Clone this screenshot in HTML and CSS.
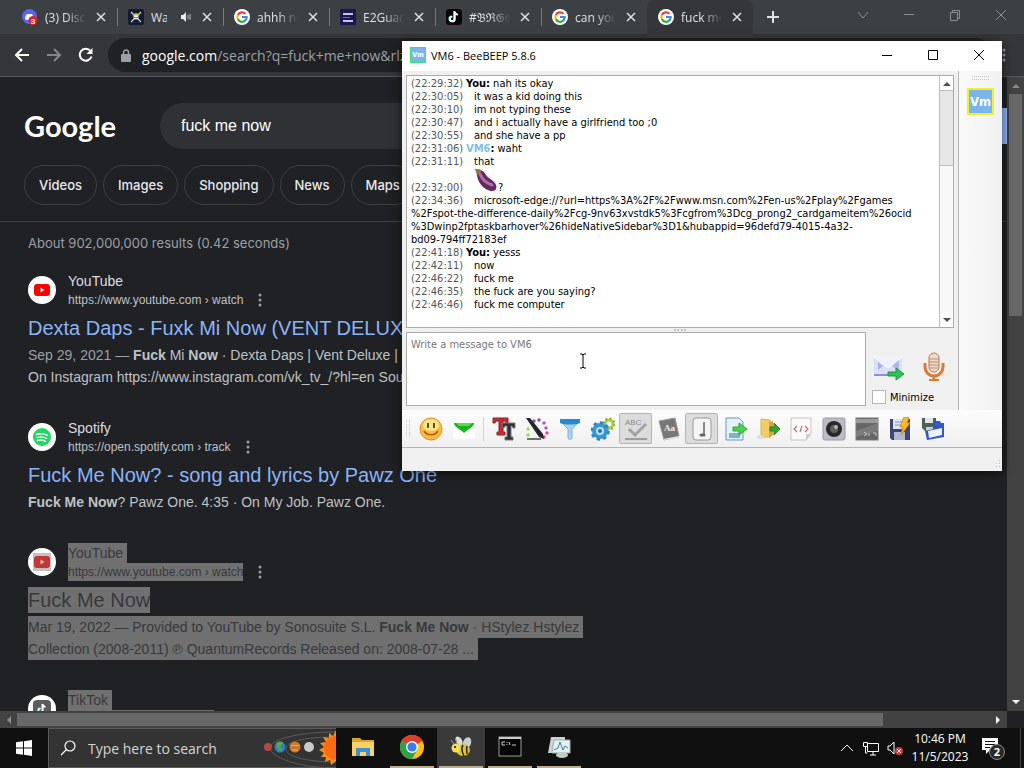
FILE: index.html
```html
<!DOCTYPE html>
<html lang="en">
<head>
  <meta charset="utf-8">
  <title>Desktop</title>
  <link rel="stylesheet" href="styles.css">
</head>
<body>
  <svg class="defs" aria-hidden="true">
    <symbol id="g-logo" viewBox="0 0 48 48">
      <circle cx="24" cy="24" r="24" fill="#fff"/>
      <g fill="none" stroke-width="6.5">
        <path d="M34.500 14.500A14 14 0 0 0 11.500 18" stroke="#ea4335"/>
        <path d="M11.500 18a14 14 0 0 0 0 12" stroke="#fbbc05"/>
        <path d="M11.500 30a14 14 0 0 0 22 5" stroke="#34a853"/>
        <path d="M33 35a14 14 0 0 0 5-11H24" stroke="#4285f4"/>
      </g>
    </symbol>
    <symbol id="note" viewBox="0 0 20 20">
      <path d="M11 3v9.500a3 3 0 1 1-3-3M11 3c0 2.500 2 4 4 4" fill="none" stroke="#25f4ee" stroke-width="2" transform="translate(-1 -.5)"/>
      <path d="M11 3v9.500a3 3 0 1 1-3-3M11 3c0 2.500 2 4 4 4" fill="none" stroke="#fff" stroke-width="2.400"/>
    </symbol>
    <symbol id="yt" viewBox="0 0 28 28">
      <circle cx="14" cy="14" r="14" fill="#fff"/>
      <rect x="6" y="8" width="16" height="12" rx="3" fill="#f00"/>
      <path d="M12.500 11.500v5l4-2.500z" fill="#fff"/>
    </symbol>
    <symbol id="dots" viewBox="0 0 4 16">
      <circle cx="2" cy="3" r="1.500"/><circle cx="2" cy="8" r="1.500"/><circle cx="2" cy="13" r="1.500"/>
    </symbol>
    <symbol id="x" viewBox="0 0 10 10">
      <path d="M1 1l8 8M9 1l-8 8" fill="none" stroke="currentColor" stroke-width="1.500"/>
    </symbol>
  </svg>

  <div class="browser">
    <div class="tabs">
      <div class="tab">
        <svg class="fav" viewBox="0 0 16 16"><circle cx="7.500" cy="7.500" r="7.500" fill="#5865f2"/><path d="M3 10.500c0-3 1-5 2-5.500h5l1 2-5 4z" fill="#fff"/><circle cx="11" cy="11.500" r="4.500" fill="#d9252a"/><text x="11" y="14.500" class="badge-num">3</text></svg>
        <span class="tab-title">(3) Discord</span>
        <button class="tab-close" aria-label="Close tab"><svg><use href="#x"/></svg></button>
      </div>
      <div class="tab">
        <svg class="fav" viewBox="0 0 16 16"><rect width="16" height="16" rx="2" fill="#141c33"/><path d="M3 3l10 10M13 3L3 13" stroke="#d5d8d4" stroke-width="1.200"/><circle cx="8" cy="8" r="2.500" fill="#f2f2ec"/><path d="M4.500 6.500c1-3 6-3 7 0z" fill="#c9c75a"/><path d="M6.500 8.500h1M8.500 8.500h1" stroke="#141c33"/></svg>
        <span class="tab-title short">Watch</span>
        <svg class="speaker" viewBox="0 0 12 12"><path d="M1 4h2l3-3v10L3 8H1z" fill="#e8eaed"/><path d="M8 4v4M10 3v6" stroke="#bbb" stroke-width="1"/></svg>
        <button class="tab-close" aria-label="Close tab"><svg><use href="#x"/></svg></button>
      </div>
      <div class="tab">
        <svg class="fav"><use href="#g-logo"/></svg>
        <span class="tab-title">ahhh no way</span>
        <button class="tab-close" aria-label="Close tab"><svg><use href="#x"/></svg></button>
      </div>
      <div class="tab">
        <svg class="fav" viewBox="0 0 16 16"><rect width="16" height="16" fill="#1b1750"/><path d="M3 5h10M3 12h10" stroke="#c5c5dc" stroke-width="2"/><path d="M3 8.500h7" stroke="#6d6a9a"/></svg>
        <span class="tab-title">E2Guardian</span>
        <button class="tab-close" aria-label="Close tab"><svg><use href="#x"/></svg></button>
      </div>
      <div class="tab">
        <svg class="fav" viewBox="0 0 20 20"><rect width="20" height="20" rx="4" fill="#0b0508"/><use href="#note" width="20" height="20"/></svg>
        <span class="tab-title">#𝔅ℜ𝔊𝔊</span>
        <button class="tab-close" aria-label="Close tab"><svg><use href="#x"/></svg></button>
      </div>
      <div class="tab">
        <svg class="fav"><use href="#g-logo"/></svg>
        <span class="tab-title">can you see</span>
        <button class="tab-close" aria-label="Close tab"><svg><use href="#x"/></svg></button>
      </div>
      <div class="tab active">
        <svg class="fav"><use href="#g-logo"/></svg>
        <span class="tab-title">fuck me now</span>
        <button class="tab-close" aria-label="Close tab"><svg><use href="#x"/></svg></button>
      </div>
      <button class="new-tab" aria-label="New tab"><svg viewBox="0 0 12 12"><path d="M6 0v12M0 6h12" stroke="currentColor" stroke-width="2"/></svg></button>
      <div class="win-controls">
        <button aria-label="Search tabs"><svg viewBox="0 0 12 12"><path d="M1 3l5 6 5-6"/></svg></button>
        <button aria-label="Minimize"><svg viewBox="0 0 12 12"><path d="M1 5.500h10"/></svg></button>
        <button aria-label="Restore"><svg viewBox="0 0 12 12"><path d="M1.500 3.500h7v8h-7zM3.500 3V1.500h7v8H9"/></svg></button>
        <button aria-label="Close"><svg viewBox="0 0 12 12"><path d="M1 1l10 10M11 1L1 11"/></svg></button>
      </div>
    </div>

    <div class="nav">
      <button aria-label="Back"><svg viewBox="0 0 16 16"><path d="M15 8H2M8 2L2 8l6 6"/></svg></button>
      <button class="off" aria-label="Forward"><svg viewBox="0 0 16 16"><path d="M1 8h13M8 2l6 6-6 6"/></svg></button>
      <button aria-label="Reload"><svg viewBox="0 0 16 16"><path d="M13.500 9.500A6 6 0 1 1 12.500 4"/><path d="M14.500 1v6h-6z" class="solid"/></svg></button>
      <div class="address">
        <svg viewBox="0 0 10 13"><rect y="5" width="10" height="8" rx="1" fill="#9aa0a6"/><path d="M2.500 5V3.500a2.500 2.500 0 0 1 5 0V5" fill="none" stroke="#9aa0a6" stroke-width="1.500"/></svg>
        <span><b>google.com</b>/search?q=fuck+me+now&amp;rlz=1C1</span>
      </div>
      <button class="menu" aria-label="Menu"><svg viewBox="0 0 4 16"><use href="#dots"/></svg></button>
    </div>

    <div class="viewport">
      <main class="page">
        <header class="g-header">
          <a class="g-logo" href="#">Google</a>
          <input class="g-search" type="text" value="fuck me now" aria-label="Search">
          <a class="sign-in" href="#" aria-label="Sign in"></a>
        </header>
        <nav class="chips">
          <a href="#">Videos</a>
          <a href="#">Images</a>
          <a href="#">Shopping</a>
          <a href="#">News</a>
          <a href="#">Maps</a>
        </nav>
        <div class="results">
          <p class="stats">About 902,000,000 results (0.42 seconds)</p>

          <article class="result">
            <div class="source">
              <svg class="site"><use href="#yt"/></svg>
              <div><span class="name">YouTube</span><cite>https://www.youtube.com › watch</cite></div>
              <button class="more" aria-label="About this result"><svg><use href="#dots"/></svg></button>
            </div>
            <h3><a href="#">Dexta Daps - Fuxk Mi Now (VENT DELUXE)</a></h3>
            <p><span class="date">Sep 29, 2021 —</span> <b>Fuck</b> Mi <b>Now</b> · Dexta Daps | Vent Deluxe |<br>On Instagram https://www.instagram.com/vk_tv_/?hl=en Sou</p>
          </article>

          <article class="result">
            <div class="source">
              <svg class="site" viewBox="0 0 28 28"><circle cx="14" cy="14" r="14" fill="#fff"/><circle cx="14" cy="14" r="9" fill="#1ed760"/><path d="M8.500 11.500c4-1.200 8-.8 11 .8M9 14.500c3.500-1 7-.6 9.500.8M9.500 17.500c3-.8 5.500-.5 8 .8" fill="none" stroke="#fff" stroke-width="1.500" stroke-linecap="round"/></svg>
              <div><span class="name">Spotify</span><cite>https://open.spotify.com › track</cite></div>
              <button class="more" aria-label="About this result"><svg><use href="#dots"/></svg></button>
            </div>
            <h3><a href="#">Fuck Me Now? - song and lyrics by Pawz One</a></h3>
            <p><b>Fuck Me Now</b>? Pawz One. 4:35 · On My Job. Pawz One.</p>
          </article>

          <article class="result selected">
            <div class="source">
              <svg class="site" viewBox="0 0 28 28"><use href="#yt"/><rect x="5" y="5" width="18" height="18" fill="#777" opacity=".45"/></svg>
              <div><span class="name">YouTube&nbsp;</span><cite>https://www.youtube.com › watch</cite></div>
              <button class="more" aria-label="About this result"><svg><use href="#dots"/></svg></button>
            </div>
            <h3><a href="#">Fuck Me Now</a></h3>
            <p><mark>Mar 19, 2022 — Provided to YouTube by Sonosuite S.L. <b>Fuck Me Now</b> · HStylez Hstylez&nbsp;</mark><br><mark>Collection (2008-2011) ℗ QuantumRecords Released on: 2008-07-28 ...&nbsp;</mark></p>
          </article>

          <article class="result selected">
            <div class="source">
              <svg class="site" viewBox="0 0 28 28"><circle cx="14" cy="14" r="14" fill="#fff"/><rect x="5" y="5" width="18" height="18" rx="4" fill="#5c5c5c"/><use href="#note" x="7" y="7" width="14" height="14"/></svg>
              <div><span class="name">TikTok&nbsp;</span><cite>https://www.tiktok.com › tag</cite></div>
            </div>
          </article>
        </div>
      </main>
      <div class="vbar">
        <button aria-label="Scroll up"><svg viewBox="0 0 8 5"><path d="M0 5l4-4 4 4z" fill="#8a8a8a"/></svg></button>
        <div class="track"><div class="thumb"></div></div>
        <button aria-label="Scroll down"><svg viewBox="0 0 8 5"><path d="M0 0l4 4 4-4z" fill="#fff"/></svg></button>
      </div>
    </div>
    <div class="hbar">
      <button aria-label="Scroll left"><svg viewBox="0 0 5 8"><path d="M5 0L1 4l4 4z" fill="#8a8a8a"/></svg></button>
      <div class="track"><div class="thumb"></div></div>
      <button aria-label="Scroll right"><svg viewBox="0 0 5 8"><path d="M0 0l4 4-4 4z" fill="#fff"/></svg></button>
    </div>
  </div>

  <section class="chat">
    <div class="titlebar">
      <span class="vm small">Vm</span>
      <h1>VM6 - BeeBEEP 5.8.6</h1>
      <button aria-label="Minimize"><svg viewBox="0 0 12 12"><path d="M1 6.500h10"/></svg></button>
      <button aria-label="Maximize"><svg viewBox="0 0 12 12"><path d="M1.500 1.500h9v9h-9z"/></svg></button>
      <button aria-label="Close"><svg viewBox="0 0 12 12"><path d="M1 1l10 10M11 1L1 11"/></svg></button>
    </div>

    <div class="chat-body">
      <div class="chat-main">
        <div class="log">
          <ul>
            <li><time>(22:29:32)</time><b>You:</b> nah its okay</li>
            <li class="cont"><time>(22:30:05)</time>it was a kid doing this</li>
            <li class="cont"><time>(22:30:10)</time>im not typing these</li>
            <li class="cont"><time>(22:30:47)</time>and i actually have a girlfriend too ;0</li>
            <li class="cont"><time>(22:30:55)</time>and she have a pp</li>
            <li><time>(22:31:06)</time><b class="peer">VM6</b><b>:</b> waht</li>
            <li class="cont"><time>(22:31:11)</time>that</li>
            <li class="cont"><time>(22:32:00)</time><svg class="eggplant" viewBox="0 0 24 24"><path d="M3 4c4-3 7-1 9 3 2 3 5 4 8 7 4 4 3 9-2 9C11 23 2 14 3 4z" fill="#662a62"/><path d="M6 6c2 5 6 9 12 11" fill="none" stroke="#b070aa" stroke-width="3" stroke-linecap="round"/><path d="M1 1l4 0 3 2-3 2-2 3-1-4z" fill="#8a7a45"/></svg>?</li>
            <li class="cont"><time>(22:34:36)</time>microsoft-edge://?url=https%3A%2F%2Fwww.msn.com%2Fen-us%2Fplay%2Fgames<br>%2Fspot-the-difference-daily%2Fcg-9nv63xvstdk5%3Fcgfrom%3Dcg_prong2_cardgameitem%26ocid<br>%3Dwinp2fptaskbarhover%26hideNativeSidebar%3D1&amp;hubappid=96defd79-4015-4a32-<br>bd09-794ff72183ef</li>
            <li><time>(22:41:18)</time><b>You:</b> yesss</li>
            <li class="cont"><time>(22:42:11)</time>now</li>
            <li class="cont"><time>(22:46:22)</time>fuck me</li>
            <li class="cont"><time>(22:46:35)</time>the fuck are you saying?</li>
            <li class="cont"><time>(22:46:46)</time>fuck me computer</li>
          </ul>
          <div class="log-bar">
            <button aria-label="Scroll up"><svg viewBox="0 0 8 5"><path d="M0 5l4-4 4 4z"/></svg></button>
            <div class="track"><div class="thumb"></div></div>
            <button aria-label="Scroll down"><svg viewBox="0 0 8 5"><path d="M0 0l4 4 4-4z"/></svg></button>
          </div>
        </div>
        <div class="splitter"><i></i></div>
        <div class="compose">
          <textarea placeholder="Write a message to VM6" aria-label="Message"></textarea>
          <div class="send">
            <button aria-label="Send"><svg viewBox="0 0 32 32"><path d="M2 6h28v18H2z" fill="#dcdffa"/><path d="M2 23h22v2H2z" fill="#8d93c4"/><path d="M2 6l14 11L30 6" fill="#eef0ff" stroke="#fff"/><path d="M6 11l5 4-5 4z" fill="#aab0e6"/><path d="M27 9l-7 6 7 5z" fill="#aab8e6"/><path d="M16 21h8v-4l8 6-8 6v-4h-8z" fill="#2fc254" stroke="#1d9a3c"/></svg></button>
            <button aria-label="Record voice"><svg viewBox="0 0 32 32"><path d="M7 12v4a9 9 0 0 0 18 0v-4M16 25v4" fill="none" stroke="#d9793a" stroke-width="3"/><path d="M11 29h10" stroke="#d9793a" stroke-width="2"/><rect x="11" y="2" width="10" height="19" rx="5" fill="#e6dcd4" stroke="#c9743e"/><path d="M11 8h10M11 11h10M11 14h10M11 17h10" stroke="#c98b62"/></svg></button>
            <label><input type="checkbox"> Minimize</label>
          </div>
        </div>
      </div>
      <aside class="dock">
        <i class="grip-h"></i>
        <span class="vm">Vm</span>
      </aside>
    </div>

    <div class="toolbar">
      <i class="grip-v"></i>
      <button aria-label="Emoticons"><svg viewBox="0 0 24 24"><circle cx="12" cy="12" r="11" fill="#fdbd3c" stroke="#e3902a"/><ellipse cx="12" cy="8" rx="8" ry="6" fill="#ffe68a"/><path d="M9 6v5M15 6v5" stroke="#5b3a10" stroke-width="1.800"/><path d="M5 14c3 5 11 5 14 0" fill="none" stroke="#b0561a" stroke-width="1.500"/></svg></button>
      <button aria-label="Presence"><svg viewBox="0 0 24 24"><rect x="1" y="5" width="22" height="17" rx="3" fill="#fff"/><path d="M2 6h20c0 4-6 6-10 10C8 12 2 10 2 6z" fill="#17b51c"/><path d="M4 6h16l-3 3H7z" fill="#57dc4b"/></svg></button>
      <i class="sep"></i>
      <button aria-label="Font"><svg viewBox="0 0 24 24"><path d="M1 1h15v5h-2l-1-2h-2v11h2v3H5v-3h2V4H4L3 6H1z" fill="#cc2a32" stroke="#8b2229"/><path d="M10 6h13v5h-2l-1-2h-1v11h2v3h-8v-3h2V9h-2l-1 2h-1z" fill="#303238" stroke="#777"/></svg></button>
      <button aria-label="Font color"><svg viewBox="0 0 24 24"><g stroke-width="3.500" stroke-linecap="round" fill="none"><path d="M3 18v0M3 12v0" stroke="#9be05a"/><path d="M9 4v0M14 3v0" stroke="#7257b8"/><path d="M19 6v0M21 11v0" stroke="#a566b5"/><path d="M22 16v0M19 20v0" stroke="#e0508e"/></g><path d="M1 1l4 0L18 17l1 5-5-2z" fill="#24262b"/><path d="M2 22h14" stroke="#444" stroke-width="1.500"/></svg></button>
      <button aria-label="Filter"><svg viewBox="0 0 24 24"><path d="M2 4l8 8v9c1 2 3 2 4 0v-9l8-8z" fill="#a7d3f0" stroke="#7fb4dc"/><path d="M2 2h20v4c-5 2-15 2-20 0z" fill="#258bcf"/></svg></button>
      <button aria-label="Options"><svg viewBox="0 0 24 24"><circle cx="18" cy="7" r="4" fill="none" stroke="#a6ce4d" stroke-width="3"/><circle cx="18" cy="7" r="5.500" fill="none" stroke="#86b331" stroke-width="2" stroke-dasharray="2 2.300"/><circle cx="9" cy="14" r="6" fill="#bfe2f7" stroke="#3599d6" stroke-width="4"/><circle cx="9" cy="14" r="8.500" fill="none" stroke="#2a85c4" stroke-width="2.500" stroke-dasharray="3.300 3.300"/><circle cx="9" cy="14" r="2" fill="#2a6fa5"/></svg></button>
      <button class="pressed" aria-label="Spell check"><svg viewBox="0 0 24 24"><text x="1" y="8" class="abc">ABC</text><path d="M5 12l6 6L22 7" fill="none" stroke="#a2a2a2" stroke-width="3"/><path d="M1 22h22" stroke="#888" stroke-width="1.500"/></svg></button>
      <button aria-label="Dictionary"><svg viewBox="0 0 24 24"><path d="M2 4L18 1l4 18L7 23z" fill="#777" stroke="#999"/><path d="M6 22l16-3v2L7 23z" fill="#ddd"/><text x="7" y="14" class="aa">Aa</text></svg></button>
      <button class="pressed" aria-label="Beep"><svg viewBox="0 0 24 24"><rect x="3" y="1" width="18" height="22" rx="3" fill="#f4f4f4" stroke="#999"/><path d="M14 5v12" stroke="#666" stroke-width="1.500"/><path d="M14 18h-3" stroke="#666" stroke-width="3" stroke-linecap="round"/></svg></button>
      <button aria-label="Send file"><svg viewBox="0 0 24 24"><path d="M3 1h13l4 4v18H3z" fill="#e3f1f8" stroke="#6e97b5"/><path d="M6 16h11v5H6z" fill="#7fb0cd"/><path d="M10 10h6V6l8 6-8 6v-4h-6z" fill="#4fd04c" stroke="#2ba336"/></svg></button>
      <button aria-label="Send folder"><svg viewBox="0 0 24 24"><path d="M5 2l9 1v17H5z" fill="#f1cd66" stroke="#dcb350"/><path d="M13 5l4-1v14l-4 3z" fill="#d5a540"/><path d="M1 20c2-4 7-2 8 2H2z" fill="#ddd"/><path d="M14 10h4V6l6 6-6 6v-4h-4z" fill="#35a32f" stroke="#2b862a"/></svg></button>
      <button aria-label="Code"><svg viewBox="0 0 24 24"><path d="M2 1h20v16l-5 6H2z" fill="#fbfafa" stroke="#c9c3c3"/><path d="M22 17h-5v6z" fill="#ccc"/><path d="M8 9l-3 3 3 3M16 9l3 3-3 3M13 9l-2 6" fill="none" stroke="#cc6a6d" stroke-width="1.200"/></svg></button>
      <button aria-label="Screenshot"><svg viewBox="0 0 24 24"><rect x="1" y="1" width="22" height="22" rx="2" fill="#bcbcc8" stroke="#9a9aa6"/><circle cx="12" cy="12" r="8" fill="#292929"/><circle cx="12" cy="12" r="4" fill="#5b6358"/><circle cx="14" cy="10" r="2" fill="#b5b9ad"/></svg></button>
      <button aria-label="Console"><svg viewBox="0 0 24 24"><rect x="1" y="1" width="22" height="22" fill="#666" stroke="#777"/><path d="M1 2h22v4H1z" fill="#9a9a9a"/><path d="M1 14L23 6v8L1 20z" fill="#7b7b7b"/><path d="M9 15l3 2-3 2M14 16v3M18 16h3v3" fill="none" stroke="#ccc"/></svg></button>
      <button aria-label="Save as"><svg viewBox="0 0 24 24"><path d="M2 2h20v21H4l-2-2z" fill="#3b4674"/><path d="M5 2h13v10H5z" fill="#dbe4f0"/><path d="M7 5h8M7 8h6" stroke="#8795b5"/><path d="M6 15h11v8H6z" fill="#aeb8cd"/><path d="M16 0h5l-2 6h3l-9 12 2-8h-3z" fill="#ffb92e" stroke="#e38c17"/></svg></button>
      <button aria-label="Save"><svg viewBox="0 0 24 24"><path d="M1 1h14v13H4l-3-3z" fill="#4a6357"/><path d="M4 1h8v5H4z" fill="#dfe7e0"/><path d="M5 10h7v4H5z" fill="#c8d2cb"/><path d="M13 8V4h6l1 2h3v14L6 23l-2-9 9-2z" fill="#3555c0"/><path d="M7 14l14-3v7L8 21z" fill="#eaf3ff"/></svg></button>
    </div>
    <footer class="status"><i class="resize"></i></footer>
    <svg class="caret" viewBox="0 0 8 16"><path d="M1 1h2l1 1 1-1h2M4 2v12M1 15h2l1-1 1 1h2" fill="none" stroke="#000"/></svg>
  </section>

  <div class="taskbar">
    <button class="start" aria-label="Start"><svg viewBox="0 0 16 16"><path d="M0 2.300L7 1.300v6.200H0zM8 1.200L16 0v7.500H8zM0 8.500h7v6.200L0 13.700zM8 8.500h8V16l-8-1.200z" fill="#fff"/></svg></button>
    <label class="find">
      <svg class="glass" viewBox="0 0 16 16"><circle cx="10" cy="6" r="5"/><path d="M6.500 9.500L1 15"/></svg>
      <input type="text" placeholder="Type here to search">
      <svg class="planets" viewBox="0 0 76 40">
        <g fill="none" stroke="#5a5a5a"><path d="M76 4C36 4 10 12 10 20s26 20 66 20"/><path d="M76 9C50 9 28 12 26 20s20 14 50 14"/></g>
        <circle cx="8" cy="19" r="4" fill="#b5453f"/><circle cx="20" cy="19" r="5.500" fill="#2f7fc4"/><path d="M16 16c2-3 6-3 7-1l-3 3 2 4-3 1z" fill="#55a83f"/>
        <circle cx="35" cy="19" r="5.500" fill="#c9772c"/><path d="M31 18c3-2 6 1 8-1M32 22c3-1 4 1 6 0" fill="none" stroke="#f0b76a"/><circle cx="49" cy="19" r="5" fill="#c9c9c6"/>
        <path d="M76 2l-3 6-4-3 0 5-6-1 3 5-6 1 4 4-5 3 5 3-3 4 5 0-1 5 5-2 1 5 5-4z" fill="#f5901d"/><circle cx="76" cy="20" r="12" fill="#ff6a13"/>
      </svg>
    </label>
    <div class="apps">
      <button aria-label="File Explorer"><svg viewBox="0 0 24 24"><path d="M1 3h8l2 2h12v6H1z" fill="#e0a42e"/><path d="M1 7h22v14H1z" fill="#fbd065"/><path d="M5 21v-8h14v8h-4v-4H9v4z" fill="#3d8fd6"/></svg></button>
      <button class="open" aria-label="Chrome"><svg viewBox="0 0 24 24"><circle cx="12" cy="12" r="12" fill="#fbc116"/><path d="M12 12L1.600 6A12 12 0 0 1 22.400 6z" fill="#e33b2e"/><path d="M12 0a12 12 0 0 1 10.400 6H12z" fill="#e33b2e"/><path d="M1.600 6A12 12 0 0 0 12 24l5-9-5-3z" fill="#2ba24c"/><circle cx="12" cy="12" r="6" fill="#fff"/><circle cx="12" cy="12" r="4.600" fill="#3b7ded"/></svg></button>
      <button class="open current" aria-label="BeeBEEP"><svg viewBox="0 0 24 24"><ellipse cx="10" cy="6" rx="3" ry="5" fill="#ddd" transform="rotate(-30 10 6)"/><ellipse cx="18" cy="8" rx="4" ry="6" fill="#c8cdd2" transform="rotate(20 18 8)"/><ellipse cx="14" cy="15" rx="7" ry="6" fill="#e2c22e"/><path d="M14 10c-2 3-1 7 1 11M18 11c-1 3 0 5 0 8" stroke="#222" stroke-width="1.500" fill="none"/><circle cx="7" cy="13" r="4.500" fill="#f2df5c"/><circle cx="6" cy="12" r="1" fill="#111"/><path d="M5 9L2 5M8 9L7 4" stroke="#999"/></svg></button>
      <button class="open" aria-label="Command Prompt"><svg viewBox="0 0 24 24"><rect x="1" y="2" width="22" height="19" fill="#050505" stroke="#999"/><path d="M1 3h22" stroke="#ccc" stroke-width="2"/><path d="M7 7H4v3h3M9 7v1M9 9v1M11 7l1 3M14 10h4" fill="none" stroke="#ccc"/></svg></button>
      <button class="open" aria-label="Monitor"><svg viewBox="0 0 24 24"><path d="M4 2h14v16H1z" fill="#c9d2d4"/><path d="M7 5h16v13H5z" fill="#e9eff0" stroke="#9fb0b4"/><path d="M7 15l4-2 2-6 3 8 2-4 3 2" fill="none" stroke="#2e87a5"/><ellipse cx="15" cy="20" rx="6" ry="3" fill="#c5caca"/></svg></button>
    </div>
    <div class="tray">
      <button aria-label="Hidden icons"><svg viewBox="0 0 16 16"><path d="M2 11l6-6 6 6"/></svg></button>
      <button aria-label="Network"><svg viewBox="0 0 16 16"><path d="M4.500 3.500h11v8h-11zM10 12v3M7 15h6M.5 2.500h4v4h-4zM2.500 7v6h2"/></svg></button>
      <button aria-label="Volume"><svg viewBox="0 0 16 16"><path d="M1 6h2l4-4v12l-4-4H1z"/><circle cx="12" cy="11" r="4" fill="#d33b3e" stroke="none"/><path d="M10 9l4 4M14 9l-4 4"/></svg></button>
      <div class="clock"><time>10:46 PM</time><time>11/5/2023</time></div>
      <button class="notes" aria-label="Notifications"><svg viewBox="0 0 24 24"><path d="M1 2h16v12H9l-4 4v-4H1z" fill="#fff" stroke="none"/><path d="M4 5.500h10M4 8.500h10M4 11.500h5" stroke="#111"/><circle cx="16" cy="16" r="7.500" fill="#2b2b2b" stroke="#8a8a8a"/><text x="16" y="20" class="count">2</text></svg></button>
    </div>
  </div>
</body>
</html>
```
FILE: styles.css
```css
* {
  box-sizing: border-box;
}

body {
  margin: 0;
  height: 100vh;
  display: flex;
  flex-direction: column;
  overflow: hidden;
  position: relative;
  background: #101010;
  font-family: "Open Sans", "Noto Sans", sans-serif;
}

button {
  display: flex;
  align-items: center;
  justify-content: center;
  padding: 0;
  border: none;
  background: none;
  color: inherit;
  font: inherit;
}

a {
  color: inherit;
  text-decoration: none;
}

h1, h3, p, ul {
  margin: 0;
  padding: 0;
  font-weight: normal;
}

svg {
  flex: none;
}

.defs {
  position: absolute;
  width: 0;
  height: 0;
}

/* browser */
.browser {
  flex: 1;
  min-height: 0;
  display: flex;
  flex-direction: column;
  background: #202124;
}

.tabs {
  height: 34px;
  display: flex;
  flex: none;
  padding-left: 11px;
  background: #3c4043;
  color: #dfe1e5;
  font-size: 12px;
}

.tab {
  flex: 0 1 106px;
  min-width: 0;
  display: flex;
  align-items: center;
  gap: 7px;
  padding: 0 8px 0 11px;
  position: relative;
}

.tab + .tab:not(.active)::before {
  content: "";
  position: absolute;
  left: 0;
  top: 8px;
  height: 18px;
  width: 1px;
  background: #75797d;
}

.tab.active {
  background: #35363a;
  border-radius: 8px 8px 0 0;
}

.fav {
  width: 16px;
  height: 16px;
}

.badge-num {
  font: bold 8px "Liberation Sans", sans-serif;
  fill: #fff;
  text-anchor: middle;
}

.tab-title {
  flex: 1;
  min-width: 0;
  overflow: hidden;
  white-space: nowrap;
  mask-image: linear-gradient(to right, #000 50%, transparent);
}

.tab-title.short {
  mask-image: none;
  flex: 0 1 16px;
}

.speaker {
  width: 12px;
  height: 12px;
  margin-left: auto;
}

.tab-close {
  width: 16px;
  height: 16px;
}

.tab-close svg {
  width: 10px;
  height: 10px;
}

.new-tab {
  width: 40px;
}

.new-tab svg {
  width: 12px;
  height: 12px;
}

.win-controls {
  display: flex;
  margin-left: auto;
  color: #8d9093;
}

.win-controls button {
  width: 46px;
  height: 30px;
}

.win-controls svg {
  width: 12px;
  height: 12px;
  fill: none;
  stroke: currentColor;
}

.nav {
  height: 43px;
  flex: none;
  display: flex;
  align-items: center;
  background: #35363a;
  border-bottom: 1px solid #54575b;
  padding: 0 8px 0 6px;
  color: #fff;
}

.nav > button {
  width: 32px;
  height: 32px;
}

.nav > button svg {
  width: 16px;
  height: 16px;
  fill: none;
  stroke: currentColor;
  stroke-width: 2;
}

.nav .off {
  color: #85878a;
}

.nav .solid {
  fill: currentColor;
  stroke: none;
}

.nav > .menu {
  width: 24px;
}

.nav > .menu svg {
  fill: #9aa0a6;
  stroke: none;
}

.address {
  flex: 1;
  height: 34px;
  margin-left: 6px;
  padding-left: 13px;
  border-radius: 17px;
  background: #202124;
  display: flex;
  align-items: center;
  gap: 11px;
  font-size: 14px;
  color: #9aa0a6;
  white-space: nowrap;
}

.address b {
  font-weight: normal;
  color: #fff;
}

.address svg {
  width: 10px;
  height: 13px;
}

.viewport {
  flex: 1;
  min-height: 0;
  display: flex;
}

.page {
  flex: 1;
  min-width: 0;
  overflow: hidden;
  font-family: "Liberation Sans", Arial, sans-serif;
  color: #bdc1c6;
}

.g-header {
  display: flex;
  align-items: center;
  height: 46px;
  margin: 26px 0 16px 24px;
}

.g-logo {
  width: 136px;
  font-family: Lato, sans-serif;
  font-size: 29px;
  font-weight: bold;
  line-height: 46px;
  color: #fff;
}

.g-search {
  width: 500px;
  height: 46px;
  border: none;
  border-radius: 23px;
  padding: 0 21px;
  background: #303134;
  color: #fff;
  font: 16px "Liberation Sans", Arial, sans-serif;
}

.sign-in {
  flex: none;
  width: 96px;
  height: 36px;
  margin-left: auto;
  margin-right: -40px;
  background: #8ab4f8;
}

.chips {
  display: flex;
  gap: 6px;
  padding: 0 24px 16px;
  border-bottom: 1px solid #3c4043;
}

.chips a {
  height: 40px;
  padding: 0 14px;
  border: 1px solid #3c4043;
  border-radius: 20px;
  line-height: 38px;
  font-family: Inter, sans-serif;
  font-size: 13px;
  font-weight: 500;
  color: #e8eaed;
}

.results {
  padding-left: 28px;
}

.stats {
  padding: 11px 0 18px;
  line-height: 20px;
  font-family: Inter, sans-serif;
  font-size: 13px;
  color: #9aa0a6;
}

.result {
  margin-bottom: 30px;
  font-size: 14px;
  line-height: 22px;
  white-space: nowrap;
}

.source {
  display: flex;
  align-items: center;
  height: 38px;
  gap: 12px;
}

.site {
  width: 28px;
  height: 28px;
}

.name,
.source cite {
  display: block;
  width: max-content;
  font-style: normal;
}

.name {
  font-size: 14px;
  line-height: 20px;
  color: #dadce0;
}

.source cite {
  font-size: 12px;
  line-height: 18px;
}

.more {
  align-self: flex-end;
  width: 10px;
  height: 18px;
  fill: #9aa0a6;
}

.more svg {
  width: 4px;
  height: 16px;
}

.result h3 {
  margin: 6px 0 3px;
  font-size: 20px;
  line-height: 26px;
  color: #8ab4f8;
}

.date {
  color: #9aa0a6;
}

.selected h3 a,
.selected .name,
.selected cite,
.selected mark {
  display: inline-block;
  background: #707071;
  color: #38393b;
}

.selected .name,
.selected cite {
  display: block;
}

/* page scrollbars */
.vbar {
  width: 17px;
  flex: none;
  display: flex;
  flex-direction: column;
  background: #424242;
}

.vbar button,
.hbar button {
  width: 17px;
  height: 17px;
}

.vbar .track,
.hbar .track {
  flex: 1;
}

.vbar .thumb {
  height: 37%;
  margin: 0 2px;
  background: #686868;
}

.vbar svg {
  width: 8px;
  height: 5px;
}

.hbar {
  height: 17px;
  flex: none;
  margin-right: 17px;
  display: flex;
  background: #424242;
}

.hbar svg {
  width: 5px;
  height: 8px;
}

.hbar .thumb {
  width: 89%;
  height: 13px;
  margin: 2px 0;
  background: #686868;
}

/* chat window */
.chat {
  position: absolute;
  left: 402px;
  top: 41px;
  width: 600px;
  display: flex;
  flex-direction: column;
  background: #f0f0f0;
  color: #000;
  box-shadow: 0 2px 10px rgba(0, 0, 0, 0.6);
  font-family: "DejaVu Sans Condensed", "Noto Sans", sans-serif;
  font-size: 11px;
}

.titlebar {
  height: 30px;
  display: flex;
  align-items: center;
  padding: 0 0 2px 8px;
  background: #fff;
}

.titlebar h1 {
  flex: 1;
  margin-left: 5px;
  font-family: "Open Sans", sans-serif;
  font-size: 11px;
}

.titlebar button {
  width: 46px;
  height: 28px;
}

.titlebar svg {
  width: 12px;
  height: 12px;
  fill: none;
  stroke: #000;
}

.vm {
  width: 27px;
  height: 27px;
  display: flex;
  align-items: center;
  justify-content: center;
  border: 2px solid #f0f032;
  background: #7cb5ee;
  color: #fff;
  font-size: 13px;
  font-weight: bold;
}

.vm.small {
  width: 16px;
  height: 16px;
  border: 1px solid #38e07a;
  font-size: 7px;
  line-height: 12px;
}

.chat-body {
  display: flex;
}

.chat-main {
  flex: 1;
  padding: 4px;
}

.log {
  height: 253px;
  display: flex;
  border: 1px solid #ababab;
  background: #fff;
}

.log ul {
  flex: 1;
  padding: 1px 4px;
  list-style: none;
  line-height: 13px;
  white-space: nowrap;
}

.log time {
  display: inline-block;
  width: 55px;
  color: #555;
}

.log .cont time {
  width: 63px;
}

.log .peer {
  color: #7dbfe8;
}

.eggplant {
  width: 24px;
  height: 24px;
  vertical-align: -1px;
}

.log-bar {
  width: 14px;
  display: flex;
  flex-direction: column;
  border-left: 1px solid #bdbdbd;
  background: #f8f8f8;
}

.log-bar button {
  height: 14px;
  background: #fff;
}

.log-bar svg {
  width: 8px;
  height: 5px;
  fill: #505050;
}

.log-bar .track {
  flex: 1;
}

.log-bar .thumb {
  height: 34%;
  border: solid #bdbdbd;
  border-width: 1px 0;
  background: #e6e6e6;
}

.splitter {
  height: 4px;
  display: flex;
  align-items: center;
  justify-content: center;
}

.splitter i {
  width: 12px;
  border-top: 2px dotted #c4c4c4;
}

.compose {
  display: flex;
  height: 74px;
}

.compose textarea {
  flex: 1;
  padding: 5px 4px;
  border: 1px solid #ababab;
  background: #fff;
  resize: none;
  font: 11px/13px "DejaVu Sans Condensed", "Noto Sans", sans-serif;
}

.compose textarea::placeholder {
  color: #777;
}

.send {
  width: 88px;
  padding: 19px 0 0 6px;
  display: flex;
  flex-wrap: wrap;
  align-content: flex-start;
  gap: 7px 14px;
}

.send svg {
  width: 32px;
  height: 32px;
}

.send label {
  display: flex;
  align-items: center;
  gap: 4px;
  width: 100%;
}

.send input {
  appearance: none;
  width: 14px;
  height: 14px;
  margin: 0;
  border: 1px solid #b5b5b5;
  background: #fff;
}

.dock {
  width: 44px;
  display: flex;
  flex-direction: column;
  align-items: center;
  gap: 8px;
  padding-top: 5px;
  border-left: 1px solid #b5b5b5;
  background: linear-gradient(to right, #fafafa, #f0f0f0);
}

.grip-h {
  width: 17px;
  height: 4px;
  border: dotted #c4c4c4;
  border-width: 1px 0;
}

.toolbar {
  height: 38px;
  display: flex;
  align-items: center;
  padding-left: 4px;
  background: linear-gradient(#fcfcfc, #f0f0f0);
  border-bottom: 1px solid #b5b5b5;
}

.grip-v {
  width: 4px;
  height: 17px;
  margin-right: 4px;
  border: dotted #c4c4c4;
  border-width: 0 1px;
}

.toolbar button {
  width: 33px;
  height: 31px;
}

.toolbar svg {
  width: 24px;
  height: 24px;
}

.toolbar .pressed {
  border: 1px solid #b5b5b5;
  border-radius: 2px;
  background: #dcdcdc;
}

.sep {
  width: 1px;
  height: 24px;
  margin: 0 3px;
  background: #d4d4d4;
}

.abc {
  font: 8px "Liberation Sans", sans-serif;
  fill: #888;
}

.aa {
  font: bold 9px "Liberation Serif", serif;
  fill: #eee;
}

.status {
  height: 23px;
  display: flex;
  align-items: flex-end;
  justify-content: flex-end;
  padding: 2px;
}

.resize {
  width: 8px;
  height: 10px;
  background: radial-gradient(#b5b5b5 1px, transparent 1px) 0 0 / 3px 3px;
  clip-path: polygon(100% 0, 100% 100%, 0 100%);
}

/* mouse pointer over the message box */
.caret {
  position: absolute;
  left: 177px;
  top: 312px;
  width: 8px;
  height: 16px;
}

/* taskbar */
.taskbar {
  height: 40px;
  flex: none;
  display: flex;
  color: #fff;
}

.start {
  width: 48px;
}

.start svg {
  width: 16px;
  height: 16px;
}

.find {
  width: 288px;
  display: flex;
  align-items: center;
  border: 1px solid #5a5a5a;
  border-right: none;
  background: #333;
  overflow: hidden;
}

.glass {
  width: 16px;
  height: 16px;
  margin: 0 11px;
  fill: none;
  stroke: #fff;
  stroke-width: 1.2;
}

.find input {
  flex: 1;
  min-width: 0;
  padding: 0 0 0 1px;
  border: none;
  background: none;
  color: #fff;
  font: 14px "Open Sans", sans-serif;
}

.find input::placeholder {
  color: #d4d4d4;
  opacity: 1;
}

.planets {
  width: 76px;
  height: 40px;
}

.apps {
  flex: 1;
  display: flex;
  gap: 1px;
  padding-left: 3px;
}

.apps button {
  width: 48px;
  border-bottom: 2px solid transparent;
}

.apps .open {
  border-image: linear-gradient(to right, transparent 8%, #bfae8e 8%, #bfae8e 92%, transparent 92%) 2;
}

.apps .current {
  background: #3a3a3a;
}

.apps svg {
  width: 24px;
  height: 24px;
}

.tray {
  display: flex;
  align-items: center;
  margin-right: 3px;
  padding-right: 7px;
  border-right: 1px solid #444;
}

.tray button {
  width: 24px;
  height: 40px;
}

.tray svg {
  width: 16px;
  height: 16px;
  fill: none;
  stroke: #fff;
}

.clock {
  width: 66px;
  display: flex;
  flex-direction: column;
  text-align: center;
  font-size: 12px;
  line-height: 18px;
}

.tray .notes {
  width: 40px;
}

.tray .notes svg {
  width: 24px;
  height: 24px;
}

.tray .count {
  font: bold 11px "Open Sans", sans-serif;
  fill: #fff;
  stroke: none;
  text-anchor: middle;
}
```
